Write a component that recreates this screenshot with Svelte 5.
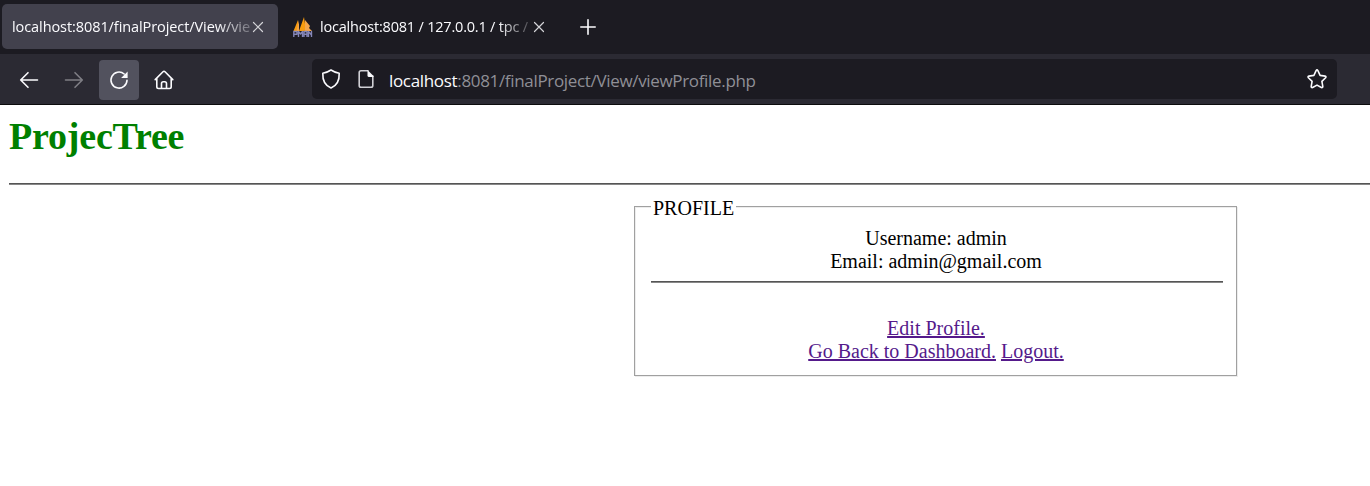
<script>
  const links = { edit: 'Edit Profile.', back: 'Go Back to Dashboard.', logout: 'Logout.' };
</script>

<div class="window">
  <header>
    <div class="tabs">
      <div class="tab active">
        <span class="label first">localhost:8081/finalProject/View/vie</span>
        <svg class="close" width="12" height="12" viewBox="0 0 12 12"><path d="M1.500 1.500l9 9M10.500 1.500l-9 9" /></svg>
      </div>
      <div class="tab">
        <svg class="favicon" width="20" height="20" viewBox="0 0 20 20">
          <path d="M.5 14L5 3v11zM6 14L11 0l2 14z" fill="#f89c0e" />
          <path d="M3.500 14L6 3v11zM12 3l5 6-1 2 3 3h-7z" fill="#f4a64b" />
          <path d="M.8 19.500v-5H4v2.800H1M5.500 19.500v-5l2 2.500 2-2.500v5M11 19.500v-5h3v5M11 17.200h3M15.500 19.500v-5l3 3.500v-3.500M18.500 14.500v5" />
        </svg>
        <span class="label second">localhost:8081 / 127.0.0.1 / tpc /</span>
        <svg class="close" width="12" height="12" viewBox="0 0 12 12"><path d="M1.500 1.500l9 9M10.500 1.500l-9 9" /></svg>
      </div>
      <svg class="plus" width="16" height="16" viewBox="0 0 16 16"><path d="M8 .8v14.400M.8 8h14.400" /></svg>
    </div>
    <div class="toolbar">
      <div class="button">
        <svg width="20" height="20" viewBox="0 0 20 20"><path d="M18.500 10H1.700M9 2.700L1.700 10 9 17.300" /></svg>
      </div>
      <div class="button disabled">
        <svg width="20" height="20" viewBox="0 0 20 20"><path d="M1.500 10h16.800M11 2.700l7.300 7.300-7.300 7.300" /></svg>
      </div>
      <div class="button hover">
        <svg width="20" height="20" viewBox="0 0 20 20"><path d="M18 10.200A8 8 0 1 1 15.200 4" /><path class="solid" d="M18.600 1.600v6.500h-6.500z" /></svg>
      </div>
      <div class="button home">
        <svg width="20" height="20" viewBox="0 0 20 20"><path d="M1.200 9.600L9 1.700q1-1 2 0l7.800 7.900M2.800 8v8.800q0 1.700 1.700 1.700h11q1.700 0 1.700-1.700V8M7.500 18.500v-5q0-1.800 1.800-1.800h1.400q1.800 0 1.800 1.800v5" /></svg>
      </div>
      <div class="address">
        <svg width="20" height="20" viewBox="0 0 20 20"><path d="M10 1q4 2.600 8.200 3.300c.3 6.700-2 12.200-8.200 14.700C3.800 16.500 1.500 11 1.800 4.300Q6 3.600 10 1z" /></svg>
        <svg class="page" width="16" height="20" viewBox="0 0 16 20"><path class="grey" d="M10 1.800H3Q1.200 1.800 1.200 3.600v12.800q0 1.800 1.800 1.800h10q1.800 0 1.800-1.800V7" /><path class="solid" d="M9.500 1l6 6v1h-4.500Q9.500 8 9.500 6.500z" /></svg>
        <span class="url"><b>localhost</b>:8081/finalProject/View/viewProfile.php</span>
        <svg class="star" width="20" height="20" viewBox="0 0 20 20"><path d="M9.100 1.600q.9-1.400 1.800 0l2.200 4.800 5 .7q1.500.4.500 1.700l-3.700 3.600.9 5q0 1.500-1.400 1.100L10 16.100l-4.400 2.400q-1.400.4-1.400-1.100l.9-5L1.400 8.800q-1-1.300.5-1.700l5-.7z" /></svg>
      </div>
    </div>
  </header>
  <main>
    <h1>ProjecTree</h1>
    <hr class="wide" />
    <fieldset>
      <legend>PROFILE</legend>
      <div class="line">Username: admin</div>
      <div class="line">Email: admin@gmail.com</div>
      <hr />
      <nav class="line">
        <a href="#edit">{links.edit}</a><br />
        <a href="#dashboard">{links.back}</a> <a href="#logout">{links.logout}</a>
      </nav>
    </fieldset>
  </main>
</div>

<style>
  .window { width: 1370px; height: 486px; overflow: hidden; background: #fff; }
  header { height: 105px; box-sizing: border-box; background: #2b2a33; border-bottom: 1px solid #0c0c0d; font-family: "Open Sans", sans-serif; color: #fbfbfe; }
  .tabs { height: 54px; box-sizing: border-box; padding: 4px 0 5px 2px; background: #1c1b22; display: flex; align-items: center; }
  .tab { width: 276px; height: 45px; box-sizing: border-box; padding: 0 14px 0 10px; border-radius: 5px; display: flex; align-items: center; }
  .tab + .tab { margin-left: 5px; }
  .active { background: #42414d; }
  .label { flex: 1; min-width: 0; white-space: nowrap; font-size: 14.5px; line-height: 24px; padding-top: 1px; }
  .first { letter-spacing: -0.08px; mask-image: linear-gradient(to right, #000 205px, transparent 250px); }
  .second { letter-spacing: -0.2px; mask-image: linear-gradient(to right, #000 178px, transparent 218px); }
  .favicon { margin-right: 7px; flex: none; }
  svg path { fill: none; stroke: #fbfbfe; stroke-width: 1.6; stroke-linejoin: round; stroke-linecap: round; }
  svg .solid { fill: #fbfbfe; stroke: none; }
  svg .grey { stroke: #d0d0d5; }
  .favicon path { stroke-width: 0; }
  .favicon path:nth-child(1) { fill: #f89c0e; }
  .favicon path:nth-child(2) { fill: #f4a64b; }
  .favicon path:nth-child(3) { stroke: #8586b8; stroke-width: 1.4; }
  .close { flex: none; }
  .close path { stroke: #d4d4d8; stroke-width: 1.2; }
  .plus { margin-left: 21px; }
  .toolbar { height: 50px; display: flex; align-items: center; padding-left: 9px; gap: 5px; }
  .button { width: 40px; height: 40px; margin-top: 2px; border-radius: 4px; display: flex; align-items: center; justify-content: center; }
  .home { box-sizing: border-box; padding-right: 1px; }
  .disabled { opacity: .4; }
  .hover { background: #52525e; }
  .address { width: 1025px; height: 40px; box-sizing: border-box; margin-left: 123px; padding: 0 10px 0 9px; border-radius: 5px; background: #1c1b22; display: flex; align-items: center; }
  .page { margin-left: 17px; }
  .url { flex: 1; margin: 3px 0 0 15px; font-size: 17px; letter-spacing: -0.33px; line-height: 25px; color: #8f8f96; white-space: nowrap; }
  .url b { font-weight: 400; color: #fbfbfe; }
  main { padding: 9px 0 0 9px; font: 20px/23px "Liberation Serif", serif; color: #000; }
  h1 { margin: 0; height: 69px; font-size: 38px; letter-spacing: -0.2px; line-height: 44px; color: #008000; }
  hr { height: 1px; margin: 0; border: 0; border-top: 1px solid #555; background: #888; }
  .wide { width: 1361px; }
  fieldset { width: 603px; height: 180px; box-sizing: border-box; margin: 11px 0 0 625px; padding: 10px 13px 0 16px; border: 1px solid #a0a0a0; box-shadow: 1px 1px #ededed, inset 1px 1px #ededed; text-align: center; }
  legend { height: 21px; padding: 0 2px; line-height: 24px; text-align: left; background: #fff; }
  .line { margin-right: 2px; }
  fieldset hr { margin-top: 8px; }
  nav { padding-top: 34px; }
  a { color: #551a8b; }
</style>
